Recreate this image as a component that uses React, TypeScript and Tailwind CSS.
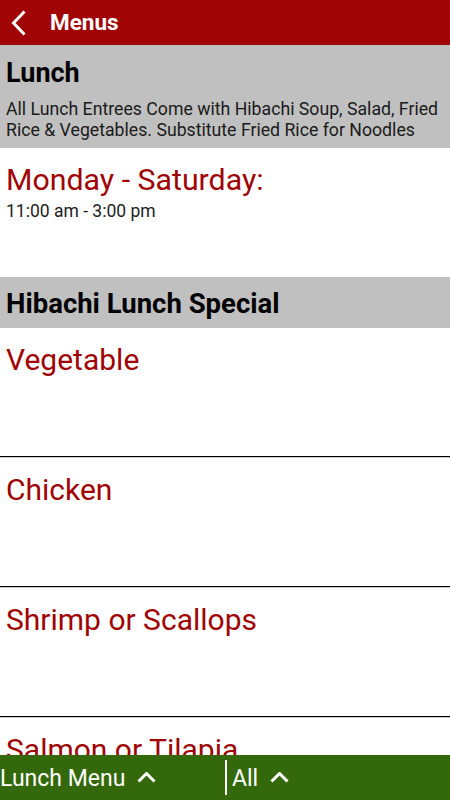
import React from 'react';

const items = ['Vegetable', 'Chicken', 'Shrimp or Scallops', 'Salmon or Tilapia'];

const ChevronUp = ({ gap }: { gap: string }) => (
    <svg width="19" height="11" viewBox="0 0 19 11" fill="none" stroke="white" strokeWidth="3" className={gap}>
        <path d="M1.5 9.5 L9.5 1.5 L17.5 9.5" />
    </svg>
);

export default function App() {
    return (
        <div className="w-[450px] h-[800px] bg-white overflow-hidden relative flex flex-col font-['Roboto',sans-serif]">
            <div className="h-[45px] shrink-0 bg-[#a00404] flex items-center">
                <svg width="16" height="28" viewBox="0 0 16 28" fill="none" stroke="white" strokeWidth="3" className="ml-[10px]">
                    <path d="M14.5 2.5 L3.5 14 L14.5 25.5" />
                </svg>
                <span className="ml-[24px] text-white text-[22.5px] font-bold">Menus</span>
            </div>

            <div className="flex-1 overflow-hidden">
                <div className="h-[103px] bg-[#c0c0c0] px-[6px] pt-[12px]">
                    <h1 className="text-[27px] font-bold text-black leading-[32px]">Lunch</h1>
                    <p className="text-[17.7px] leading-[21px] text-[#1a1a1a] mt-[10px]">
                        All Lunch Entrees Come with Hibachi Soup, Salad, Fried Rice &amp; Vegetables. Substitute Fried Rice for Noodles
                    </p>
                </div>

                <div className="h-[129px] px-[6px] pt-[14px]">
                    <div className="text-[30.3px] leading-[36px] text-[#a00404]">Monday - Saturday:</div>
                    <div className="text-[17.5px] leading-[20px] text-[#222] mt-[3px]">11:00 am - 3:00 pm</div>
                </div>

                <div className="h-[51px] bg-[#c0c0c0] px-[6px] pt-[11px]">
                    <h2 className="text-[27.5px] leading-[32px] font-bold text-black">Hibachi Lunch Special</h2>
                </div>

                {items.map((name) => (
                    <div key={name} className="h-[130px] flex flex-col">
                        <div className="flex-1 px-[6px] pt-[14px] text-[30px] leading-[36px] text-[#a00404]">{name}</div>
                        <div className="h-px bg-black" />
                        <div className="h-px bg-[#c8c8c8]" />
                    </div>
                ))}
            </div>

            <div className="absolute bottom-0 left-0 right-0 h-[45px] bg-[#33690a] flex items-center pt-[2px]">
                <div className="w-[225px] flex items-center text-white text-[23px] leading-[27px]">
                    <span>Lunch Menu</span>
                    <ChevronUp gap="ml-[12px] -mt-[2px]" />
                </div>
                <div className="w-[2px] h-[35px] bg-white -mt-[2px]" />
                <div className="flex items-center text-white text-[23px] leading-[27px] ml-[5px]">
                    <span>All</span>
                    <ChevronUp gap="ml-[12px] -mt-[2px]" />
                </div>
            </div>
        </div>
    );
}
